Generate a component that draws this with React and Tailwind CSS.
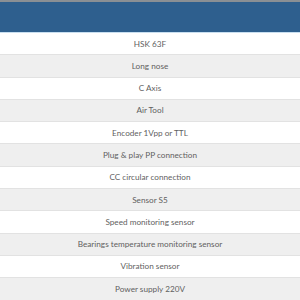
import React from 'react';

const rows = [
  'HSK 63F',
  'Long nose',
  'C Axis',
  'Air Tool',
  'Encoder 1Vpp or TTL',
  'Plug & play PP connection',
  'CC circular connection',
  'Sensor S5',
  'Speed monitoring sensor',
  'Bearings temperature monitoring sensor',
  'Vibration sensor',
  'Power supply 220V',
];

export default function App() {
  return (
    <div className="w-[300px] h-[300px] overflow-hidden bg-white font-['Lato',sans-serif]">
      <div className="h-[2px] bg-[#8a8f94]" />
      <div className="h-[31px] bg-[#2e5f8e] border-b border-[#c9dff0]" />
      <div className="flex flex-col">
        {rows.map((r, i) => (
          <div
            key={r}
            className={`h-[22.3px] shrink-0 flex items-center justify-center border-b border-[#e2e2e2] text-[8.2px] text-[#5f5f5f] ${
              i % 2 === 1 ? 'bg-[#efefef]' : 'bg-white'
            }`}
          >
            {r}
          </div>
        ))}
      </div>
    </div>
  );
}
